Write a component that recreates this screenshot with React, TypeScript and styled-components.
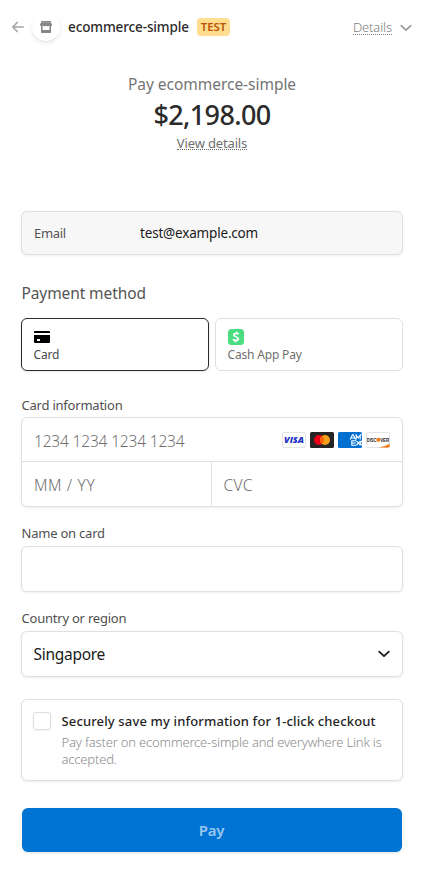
import React from 'react';
import styled, { createGlobalStyle } from 'styled-components';

const GlobalStyle = createGlobalStyle`
  *, *::before, *::after { box-sizing: border-box; }
  html { background: #fff; }
  body {
    margin: 0;
    background: #fff;
    color: #1a1a1a;
    font-family: "Noto Sans", "Open Sans", sans-serif;
  }
  button, input { font: inherit; letter-spacing: inherit; }
  button { margin: 0; cursor: pointer; }
`;

const Page = styled.div`
  width: 424px;
  height: 875px;
  display: flex;
  flex-direction: column;
`;

const Header = styled.header`
  display: flex;
  align-items: center;
  height: 54px;
  padding: 0 12px;
`;

const BackLink = styled.a`
  display: flex;
  color: #a3a3a3;
  margin-right: 8px;
`;

const Avatar = styled.div`
  display: grid;
  place-items: center;
  width: 28px;
  height: 28px;
  margin-right: 8px;
  border-radius: 50%;
  background: #fff;
  box-shadow: 0 2px 5px rgba(0, 0, 0, 0.09), 0 1px 1px rgba(0, 0, 0, 0.04);
`;

const Merchant = styled.h1`
  margin: 0 8px 0 0;
  color: #2b2b2b;
  font-size: 13.5px;
  font-weight: 500;
  line-height: 20px;
  letter-spacing: -0.12px;
`;

const TestBadge = styled.span`
  width: 33px;
  height: 18px;
  border-radius: 4px;
  background: #ffde92;
  color: #bb5504;
  font-size: 11.5px;
  font-weight: 600;
  line-height: 18px;
  letter-spacing: -0.15px;
  text-align: center;
`;

const DetailsToggle = styled.button`
  display: flex;
  align-items: center;
  gap: 8px;
  margin-left: auto;
  padding: 1px 0 0;
  border: 0;
  background: none;
  color: #808080;
  font-size: 13px;
  font-weight: 300;
  letter-spacing: -0.12px;

  svg { color: #999; }
`;

const Underlined = styled.span`
  height: 14px;
  line-height: 12px;
  border-bottom: 1px dotted currentColor;
`;

const Summary = styled.section`
  display: flex;
  flex-direction: column;
  align-items: center;
  height: 157px;
  padding-top: 19px;
`;

const SummaryTitle = styled.div`
  color: #757575;
  font-size: 15.5px;
  font-weight: 400;
  line-height: 22px;
  letter-spacing: -0.03px;
`;

const Amount = styled.div`
  margin-top: 2px;
  font-size: 27px;
  font-weight: 500;
  line-height: 36px;
  letter-spacing: -0.65px;
  color: #2b2b2b;
`;

const ViewDetails = styled.button`
  margin-top: 3px;
  height: 14px;
  padding: 0;
  border: 0;
  border-bottom: 1px dotted #666;
  background: none;
  color: #6e6e6e;
  font-size: 13px;
  line-height: 12px;
  letter-spacing: -0.15px;
`;

const Form = styled.form`
  display: flex;
  flex-direction: column;
  padding: 0 21px;
`;

const Panel = styled.div`
  border: 1px solid #e0e0e0;
  border-radius: 6px;
  background: #fff;
  box-shadow: 0 1px 3px rgba(0, 0, 0, 0.07);
`;

const EmailPanel = styled(Panel)`
  display: grid;
  grid-template-columns: 106px 1fr;
  align-items: center;
  height: 44px;
  padding: 0 12px;
  background: #f7f7f7;
`;

const EmailLabel = styled.span`
  color: #545454;
  font-size: 13px;
  font-weight: 400;
  letter-spacing: -0.35px;
`;

const EmailValue = styled.span`
  font-size: 13.5px;
  letter-spacing: -0.18px;
`;

const SectionTitle = styled.h2`
  margin: 27px 0 14px 0.5px;
  color: #545454;
  font-size: 15.5px;
  font-weight: 400;
  line-height: 22px;
  letter-spacing: -0.1px;
`;

const Methods = styled.div`
  display: grid;
  grid-template-columns: 1fr 1fr;
  gap: 6px;
  margin-bottom: 26px;
`;

const Method = styled.button<{ $selected?: boolean }>`
  display: flex;
  flex-direction: column;
  height: 53px;
  padding: 10px 11.5px 0;
  border: 1px solid ${(p) => (p.$selected ? '#2b2b2b' : '#e0e0e0')};
  border-radius: 6px;
  background: #fff;
  box-shadow: ${(p) => (p.$selected ? '0 1px 3px rgba(0, 0, 0, 0.1)' : 'none')};
  color: ${(p) => (p.$selected ? '#4a4a4a' : '#6f6f6f')};
  font-size: 12px;
  font-weight: 400;
  line-height: 16px;
  letter-spacing: -0.17px;
  text-align: left;

  svg { display: block; margin-bottom: 2px; }
`;

const Label = styled.label`
  margin: 0 0 4px 0.5px;
  color: #505050;
  font-size: 13px;
  font-weight: 400;
  line-height: 16px;
  letter-spacing: -0.22px;
`;

const CardPanel = styled(Panel)`
  display: grid;
  grid-template-columns: 190px 1fr;
  grid-template-rows: 44px 44px;
  height: 90px;
  margin-bottom: 18px;
`;

const NumberCell = styled.div`
  grid-column: 1 / -1;
  display: flex;
  align-items: center;
  padding: 0 12px;
  border-bottom: 1px solid #e0e0e0;
`;

const HalfCell = styled.div<{ $divided?: boolean }>`
  display: flex;
  align-items: center;
  padding: 0 ${(p) => (p.$divided ? 12 : 11.5)}px;
  border-right: ${(p) => (p.$divided ? '1px solid #e0e0e0' : '0')};
`;

const Field = styled.input<{ $tracking: number }>`
  flex: 1;
  width: 100%;
  min-width: 0;
  height: 24px;
  margin-top: 2px;
  padding: 0;
  border: 0;
  outline: 0;
  background: none;
  font-size: 15.5px;
  font-weight: 300;
  letter-spacing: ${(p) => p.$tracking}px;

  &::placeholder { color: #6e6e6e; opacity: 1; }
`;

const Brands = styled.div`
  display: flex;
  gap: 4px;
  svg { display: block; }
`;

const NamePanel = styled(Panel)`
  display: flex;
  align-items: center;
  height: 46px;
  padding: 0 12px;
  margin: 1px 0 18px;
`;

const SelectPanel = styled(Panel)`
  display: flex;
  align-items: center;
  justify-content: space-between;
  height: 46px;
  padding: 0 12px 0 11.5px;
  margin: 1px 0 22px;
  font-size: 15.5px;
  line-height: 22px;
  letter-spacing: -0.28px;
`;

const SavePanel = styled(Panel)`
  display: flex;
  gap: 10.5px;
  height: 82px;
  padding: 12px 11px;
`;

const Checkbox = styled.span`
  flex: none;
  width: 18px;
  height: 18px;
  border: 1px solid #dedede;
  border-radius: 3px;
  box-shadow: 0 1px 2px rgba(0, 0, 0, 0.06);
`;

const SaveTitle = styled.div`
  font-size: 13px;
  font-weight: 500;
  line-height: 18px;
  letter-spacing: 0.14px;
  white-space: nowrap;
  color: #1f1f1f;
`;

const SaveNote = styled.div`
  margin-top: 4px;
  color: #8c8c8c;
  font-size: 13px;
  font-weight: 300;
  line-height: 17px;
  letter-spacing: -0.18px;
`;

const PayButton = styled.button`
  height: 44px;
  margin: 27px 1px 0;
  padding: 0 1px 0 0;
  border: 0;
  border-radius: 6px;
  background: #0074d4;
  box-shadow: 0 1px 3px rgba(0, 0, 0, 0.12);
  color: #99c7ee;
  font-size: 15px;
  font-weight: 600;
  line-height: 45px;
  letter-spacing: -0.3px;
`;

const ArrowLeftIcon = () => (
  <svg width="12" height="12" viewBox="0 0 12 12" fill="none" stroke="currentColor" strokeWidth="1.5" strokeLinecap="round" strokeLinejoin="round">
    <path d="M11.3 6H.9M5.2 1.4.8 6l4.4 4.6" />
  </svg>
);

const StoreIcon = () => (
  <svg width="12" height="12" viewBox="0 0 12 12" fill="#858585">
    <path d="M1.2 0h9.6v1.2H1.2z" />
    <path d="M1 1.2h10l1 2.500c0 .9-.7 1.500-1.500 1.500S9 4.700 9 4.200c0 .6-.6 1-1.500 1S6 4.700 6 4.200c0 .6-.6 1-1.500 1S3 4.700 3 4.200c0 .6-.7 1-1.500 1S0 4.600 0 3.700z" />
    <path fillRule="evenodd" d="M1 5h1.500v4h7V5H11v6.200a.8.8 0 0 1-.8.800H1.800a.8.8 0 0 1-.8-.8z" />
  </svg>
);

const ChevronIcon = ({ weight = 1.8 }: { weight?: number }) => (
  <svg width="12" height="8" viewBox="0 0 12 8" fill="none" stroke="currentColor" strokeWidth={weight} strokeLinecap="round" strokeLinejoin="round">
    <path d="M1.200 1.600 6 6.200l4.800-4.600" />
  </svg>
);

const CardIcon = () => (
  <svg width="16" height="16" viewBox="0 0 16 16">
    <path d="M1 2h14a1 1 0 0 1 1 1v1H0V3a1 1 0 0 1 1-1z" />
    <path fillRule="evenodd" d="M0 6h16V13a1 1 0 0 1-1 1H1a1 1 0 0 1-1-1zM3 10v2h3v-2z" />
  </svg>
);

const CashAppIcon = () => (
  <svg width="16" height="16" viewBox="0 0 16 16">
    <rect width="16" height="16" rx="3.500" fill="#4cdd80" />
    <path d="M10.700 5.200C9.700 4.200 6 3.700 5.900 5.900 5.900 8.200 10.300 7.300 10.200 9.800 10 12.100 6.200 11.700 5 10.400M8.800 2.700l-.3 1.500M7.500 11.800l-.3 1.500" fill="none" stroke="#fff" strokeWidth="1.800" />
  </svg>
);

const VisaIcon = () => (
  <svg width="24" height="16" viewBox="0 0 24 16">
    <rect x=".5" y=".5" width="23" height="15" rx="1.500" fill="#fff" stroke="#e4e4e4" />
    <text x="2" y="11.300" fill="#1d2fc4" fontFamily="Open Sans, sans-serif" fontSize="9" fontWeight="800" fontStyle="italic" textLength="20" lengthAdjust="spacingAndGlyphs" letterSpacing="0">VISA</text>
  </svg>
);

const MastercardIcon = () => (
  <svg width="24" height="16" viewBox="0 0 24 16">
    <rect width="24" height="16" rx="1.500" fill="#252525" />
    <circle cx="9" cy="8" r="5" fill="#eb001b" />
    <circle cx="15" cy="8" r="5" fill="#f79e1b" />
    <path d="M12 4a5 5 0 0 1 0 8 5 5 0 0 1 0-8z" fill="#ff5f00" />
  </svg>
);

const AmexIcon = () => (
  <svg width="24" height="16" viewBox="0 0 24 16">
    <rect width="24" height="16" rx="1.500" fill="#016fd0" />
    <g fill="none" stroke="#fff" strokeWidth="1.100">
      <path d="M12.200 7.500 14.500 2.800h.8l2.200 4.700M13.300 6h3.200M18.200 7.500V3l2 3 2-3v4.500M24 3h-1" />
      <path d="M18 8.800h-4.200v4.500H18M13.800 11h4M18.300 8.800l4.200 4.500M22.500 8.800l-4.200 4.500M24 8.800l-1.800 2.200 1.800 2.300" />
    </g>
  </svg>
);

const DiscoverIcon = () => (
  <svg width="24" height="16" viewBox="0 0 24 16">
    <rect x=".5" y=".5" width="23" height="15" rx="1.500" fill="#fff" stroke="#e4e4e4" />
    <path d="M12.500 15.500C17 15 21 13.600 23.600 11.600V14a1.500 1.500 0 0 1-1.500 1.500z" fill="#f27712" />
    <g fill="#222" fontFamily="Liberation Sans, sans-serif" fontSize="5" fontWeight="700" letterSpacing="0">
      <text x=".8" y="9.600" textLength="9.600" lengthAdjust="spacingAndGlyphs">DISC</text>
      <text x="14.200" y="9.600" textLength="9" lengthAdjust="spacingAndGlyphs">VER</text>
    </g>
    <circle cx="12.300" cy="7.800" r="2" fill="#f27712" />
  </svg>
);

export default function App() {
  return (
    <Page>
      <GlobalStyle />
      <Header>
        <BackLink aria-label="Back"><ArrowLeftIcon /></BackLink>
        <Avatar><StoreIcon /></Avatar>
        <Merchant>ecommerce-simple</Merchant>
        <TestBadge>TEST</TestBadge>
        <DetailsToggle type="button">
          <Underlined>Details</Underlined>
          <ChevronIcon weight={1.6} />
        </DetailsToggle>
      </Header>

      <Summary>
        <SummaryTitle>Pay ecommerce-simple</SummaryTitle>
        <Amount>$2,198.00</Amount>
        <ViewDetails type="button">View details</ViewDetails>
      </Summary>

      <Form>
        <EmailPanel>
          <EmailLabel>Email</EmailLabel>
          <EmailValue>test@example.com</EmailValue>
        </EmailPanel>

        <SectionTitle>Payment method</SectionTitle>
        <Methods>
          <Method type="button" $selected><CardIcon />Card</Method>
          <Method type="button"><CashAppIcon />Cash App Pay</Method>
        </Methods>

        <Label htmlFor="number">Card information</Label>
        <CardPanel>
          <NumberCell>
            <Field id="number" placeholder="1234 1234 1234 1234" $tracking={-0.17} />
            <Brands>
              <VisaIcon />
              <MastercardIcon />
              <AmexIcon />
              <DiscoverIcon />
            </Brands>
          </NumberCell>
          <HalfCell $divided><Field placeholder="MM / YY" $tracking={0.6} /></HalfCell>
          <HalfCell><Field placeholder="CVC" $tracking={0.4} /></HalfCell>
        </CardPanel>

        <Label htmlFor="name">Name on card</Label>
        <NamePanel><Field id="name" $tracking={0} /></NamePanel>

        <Label>Country or region</Label>
        <SelectPanel>
          Singapore
          <ChevronIcon />
        </SelectPanel>

        <SavePanel>
          <Checkbox role="checkbox" aria-checked="false" />
          <div>
            <SaveTitle>Securely save my information for 1-click checkout</SaveTitle>
            <SaveNote>Pay faster on ecommerce-simple and everywhere Link is accepted.</SaveNote>
          </div>
        </SavePanel>

        <PayButton type="button">Pay</PayButton>
      </Form>
    </Page>
  );
}
